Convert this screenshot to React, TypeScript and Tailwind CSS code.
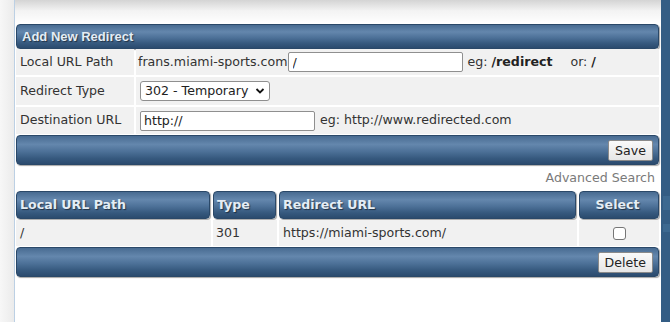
import React from "react";

const bar =
  "rounded-[4px] border border-[#2a4868] bg-[linear-gradient(to_bottom,#486b91_0%,#6487ad_30%,#4d7198_55%,#36597e_80%,#2b4b6e_100%)] shadow-[1px_1px_1px_rgba(0,0,0,0.35)]";

const btn =
  "h-[21px] rounded-[2px] border border-[#8a8a8a] bg-[linear-gradient(to_bottom,#fafafa,#e6e6e6)] px-[6px] text-[12.6px] leading-[19px] text-[#222]";

const hdrText =
  "font-bold text-[#e4edf5] [text-shadow:1px_1px_1px_rgba(0,0,0,0.5)]";

export default function App() {
  return (
    <div className="flex h-[322px] w-[670px] overflow-hidden bg-white font-['DejaVu_Sans',Verdana,sans-serif] text-[12.6px] text-[#333]">
      <div className="w-[14px] shrink-0 bg-[linear-gradient(to_right,#f7f7f7,#ebebeb)]" />
      <div className="w-px shrink-0 bg-[#bcd0e4]" />
      <div className="flex w-[646px] shrink-0 flex-col">
        <div className="h-[24px] shrink-0 bg-[linear-gradient(to_bottom,#d4d4d4,#f3f3f3_45%,#ffffff)]" />
        <div className="ml-px flex w-[643px] flex-col">
          {/* Add New Redirect header */}
          <div className={`${bar} flex h-[25px] items-center pl-[5px]`}>
            <span className={`${hdrText} font-['Liberation_Sans',Arial,sans-serif] text-[13px]`}>Add New Redirect</span>
          </div>

          <div className="flex flex-col gap-[2px]">
            {/* Row 1 */}
            <div className="flex h-[26px] gap-[2px]">
              <div className="flex w-[118px] items-center bg-[#f1f1f1] pl-[4px]">Local URL Path</div>
              <div className="flex flex-1 items-center bg-[#f1f1f1] pl-[2px]">
                <span>frans.miami-sports.com</span>
                <input
                  readOnly
                  value="/"
                  className="h-[20px] w-[175px] rounded-[2px] border border-[#8f8f8f] bg-white px-[4px] text-[12.6px] text-[#222] outline-none"
                />
                <span className="ml-[5px]">
                  eg: <b className="text-[#222]">/redirect</b>
                </span>
                <span className="ml-[18px]">
                  or: <b className="text-[#222]">/</b>
                </span>
              </div>
            </div>
            {/* Row 2 */}
            <div className="flex h-[28px] gap-[2px]">
              <div className="flex w-[118px] items-center bg-[#f1f1f1] pl-[4px]">Redirect Type</div>
              <div className="flex flex-1 items-center bg-[#f1f1f1] pl-[4px]">
                <div className="flex h-[20px] w-[130px] items-center justify-between rounded-[3px] border border-[#8f8f8f] bg-white pl-[4px] pr-[4px] text-[#222]">
                  <span>302 - Temporary</span>
                  <svg width="10" height="10" viewBox="0 0 10 10">
                    <path d="M1.5 3 L5 6.5 L8.5 3" fill="none" stroke="#111" strokeWidth="1.8" />
                  </svg>
                </div>
              </div>
            </div>
            {/* Row 3 */}
            <div className="flex h-[27px] gap-[2px]">
              <div className="flex w-[118px] items-center bg-[#f1f1f1] pl-[4px]">Destination URL</div>
              <div className="flex flex-1 items-center bg-[#f1f1f1] pl-[4px]">
                <input
                  readOnly
                  value="http://"
                  className="h-[20px] w-[175px] rounded-[2px] border border-[#8f8f8f] bg-white px-[3px] text-[12.6px] text-[#222] outline-none"
                />
                <span className="ml-[5px]">eg: http://www.redirected.com</span>
              </div>
            </div>
          </div>

          {/* Save bar */}
          <div className={`${bar} mt-px flex h-[30px] items-center justify-end pr-[5px]`}>
            <button className={btn}>Save</button>
          </div>

          {/* Advanced Search */}
          <div className="flex h-[26px] items-center justify-end pr-[4px] text-[#7a7a7a]">Advanced Search</div>

          {/* Table */}
          <div className="grid grid-cols-[194px_63px_297px_1fr] gap-x-[3px]">
            <div className={`${bar} flex h-[28px] items-center pl-[3px]`}>
              <span className={hdrText}>Local URL Path</span>
            </div>
            <div className={`${bar} flex h-[28px] items-center pl-[3px]`}>
              <span className={hdrText}>Type</span>
            </div>
            <div className={`${bar} flex h-[28px] items-center pl-[3px]`}>
              <span className={hdrText}>Redirect URL</span>
            </div>
            <div className={`${bar} flex h-[28px] items-center justify-center pr-[3px]`}>
              <span className={hdrText}>Select</span>
            </div>
          </div>
          <div className="mt-px grid h-[26px] grid-cols-[195px_64px_298px_1fr] gap-x-[2px]">
            <div className="flex items-center bg-[#f1f1f1] pl-[4px]">/</div>
            <div className="flex items-center bg-[#f1f1f1] pl-[3px]">301</div>
            <div className="flex items-center bg-[#f1f1f1] pl-[4px]">https://miami-sports.com/</div>
            <div className="flex items-center justify-center bg-[#f1f1f1]">
              <div className="h-[13px] w-[13px] rounded-[3px] border border-[#767676] bg-white" />
            </div>
          </div>

          {/* Delete bar */}
          <div className={`${bar} mt-px flex h-[30px] items-center justify-end pr-[5px]`}>
            <button className={btn}>Delete</button>
          </div>
        </div>
      </div>
      <div className="flex w-[10px] shrink-0 flex-col bg-[#345d84]">
        <div className="h-[196px]" />
        <div className="ml-[2px] h-[14px] bg-[#3d6990]" />
        <div className="h-[14px]" />
        <div className="ml-[2px] h-[8px] bg-[#3d6990]" />
      </div>
    </div>
  );
}
